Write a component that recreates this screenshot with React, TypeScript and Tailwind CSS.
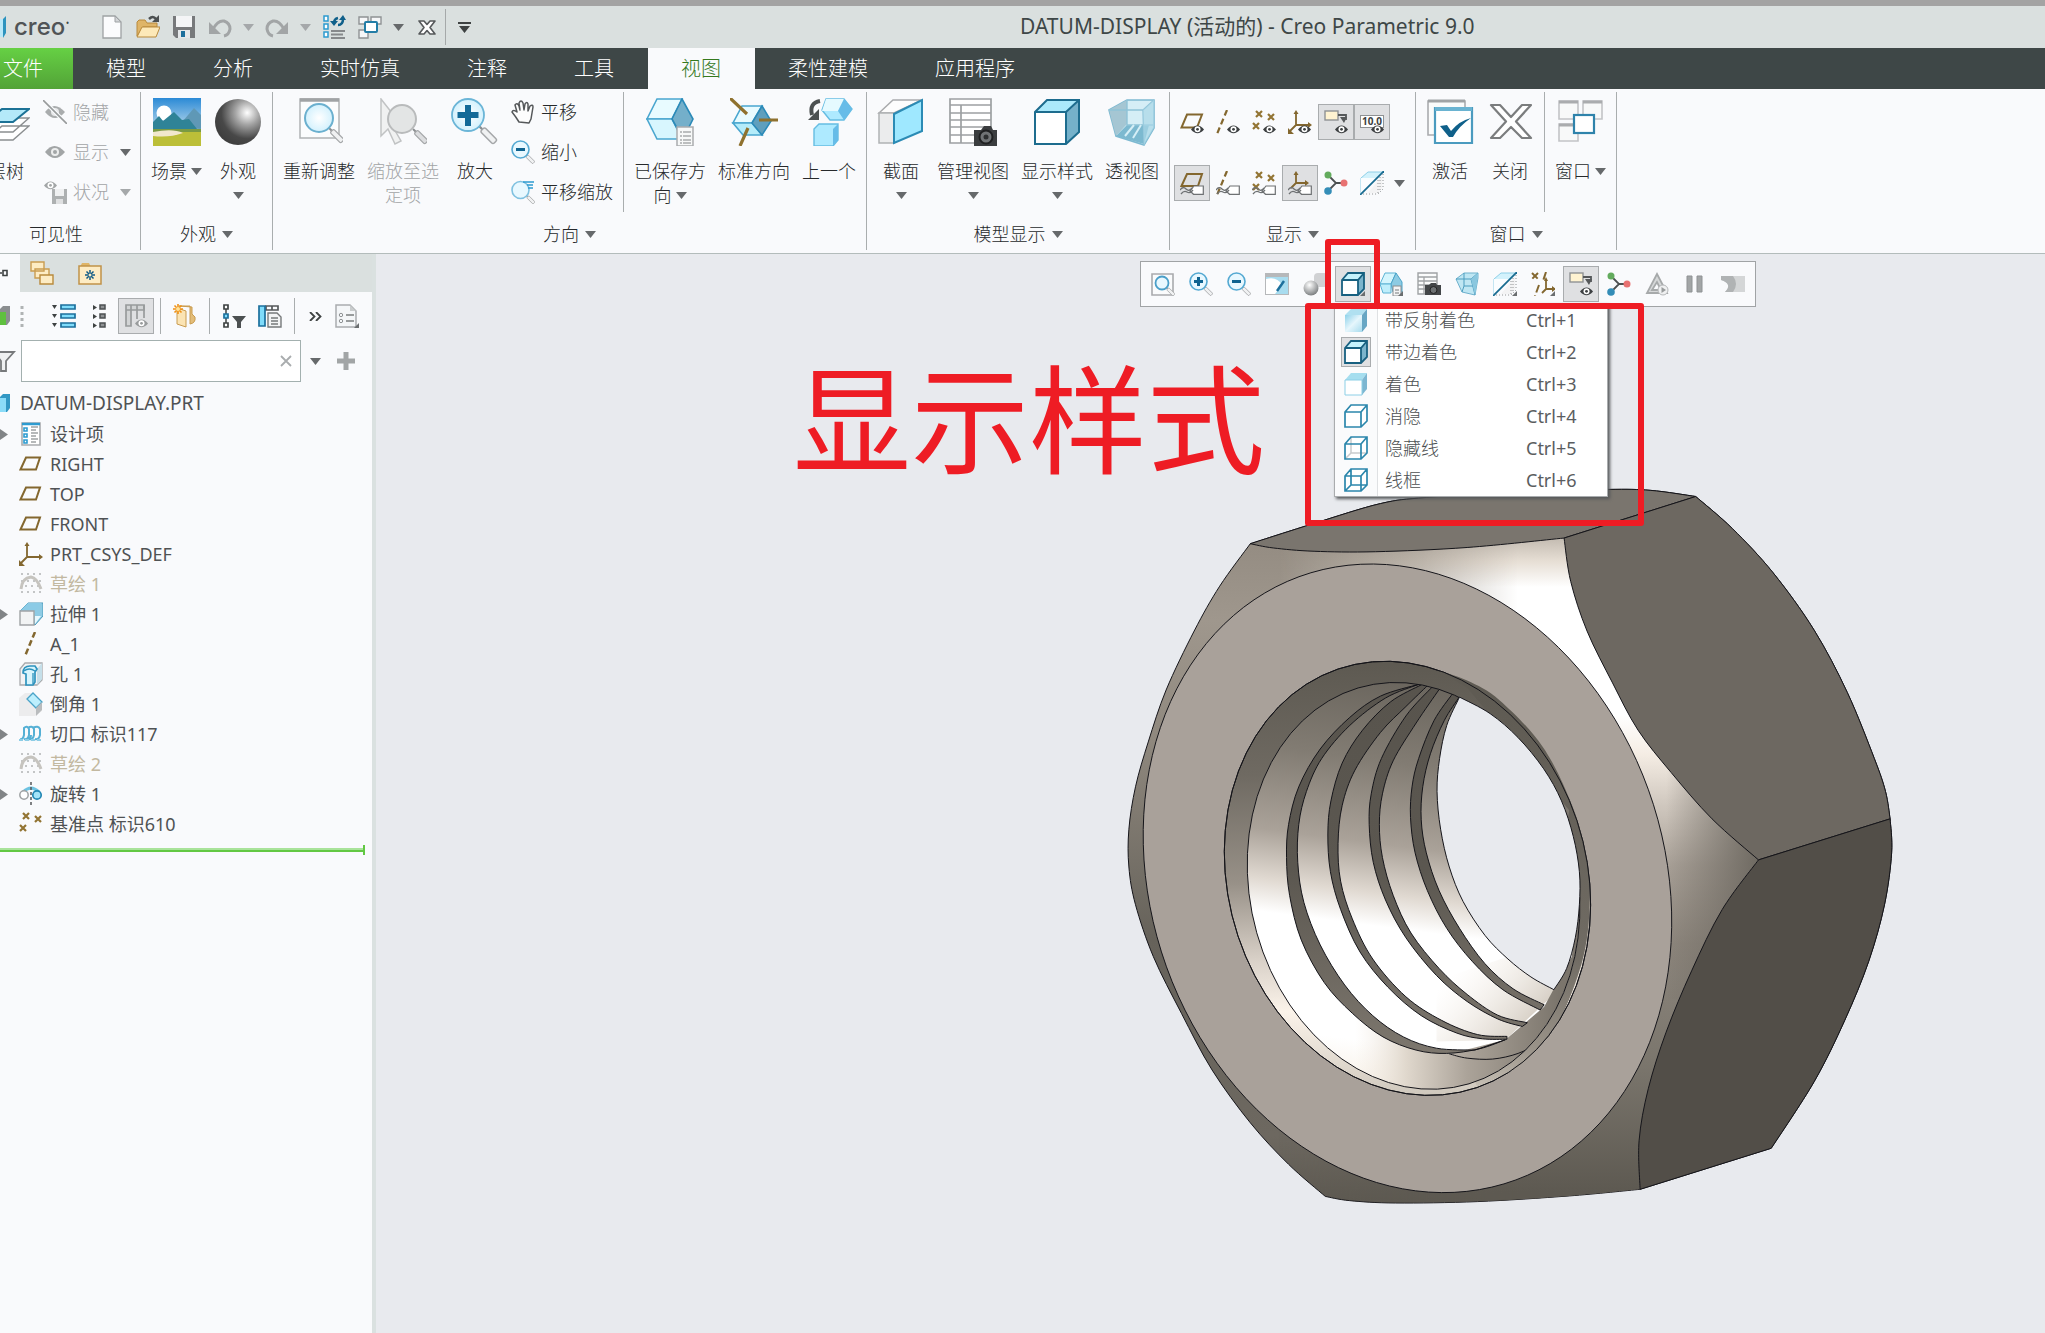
import { useState } from "react";
import type { ReactNode } from "react";

type Point = [number, number];

// Smooth curve through a list of points
function curve(points: Point[], start = "M") {
  let d = `${start}${points[0][0]},${points[0][1]}`;
  for (let i = 0; i < points.length - 1; i++) {
    const a = points[i - 1] ?? points[i];
    const b = points[i];
    const c = points[i + 1];
    const e = points[i + 2] ?? c;
    d += ` C${b[0] + (c[0] - a[0]) / 6},${b[1] + (c[1] - a[1]) / 6}`;
    d += ` ${c[0] - (e[0] - b[0]) / 6},${c[1] - (e[1] - b[1]) / 6} ${c[0]},${c[1]}`;
  }
  return d;
}

function Icon({ box = 24, children }: { box?: number; children: ReactNode }) {
  return (
    <svg
      viewBox={`0 0 ${box} ${box}`}
      className={box === 48 ? "h-12 w-12 shrink-0" : "h-6 w-6 shrink-0"}
      fill="none"
      aria-hidden="true"
    >
      {children}
    </svg>
  );
}

function Caret({ faded = false }: { faded?: boolean }) {
  return (
    <svg viewBox="0 0 11 7" className="h-[7px] w-[11px] shrink-0" aria-hidden="true">
      <path d="M0 0h11L5.5 7z" fill={faded ? "#a5a8aa" : "#66696b"} />
    </svg>
  );
}

/* ---------- shared icon parts ---------- */

function Eye({ x, y, color = "#3c3f41" }: { x: number; y: number; color?: string }) {
  return (
    <g transform={`translate(${x} ${y})`}>
      <path d="M0 4.500Q6.500-3.500 13 4.500Q6.500 12 0 4.500z" fill={color} />
      <circle cx="6.500" cy="4.300" r="3" fill="#fff" />
      <circle cx="6.500" cy="4.300" r="1.400" fill={color} />
    </g>
  );
}

function Tag() {
  return (
    <>
      <path d="M10 20l4-5h9.300v8.300H13.500z" fill="#fff" stroke="#6e7173" strokeWidth="1.200" />
      <path d="M0 19q3-4 6-1t6-1M1 23q3-4 6-2t6-2" stroke="#6e7173" strokeWidth="1.300" />
    </>
  );
}

function Handle({ x, y, scale = 1, faded = false }: { x: number; y: number; scale?: number; faded?: boolean }) {
  return (
    <g transform={`translate(${x} ${y}) rotate(45) scale(${scale})`}>
      <rect x="0" y="-1" width="5" height="2" fill="#8b8e90" />
      <rect x="4" y="-2.500" width="15" height="5" rx="1.500" fill={faded ? "#dcdddf" : "#f0f1f2"} stroke="#a5a7a9" strokeWidth="1.300" />
    </g>
  );
}

function Corner() {
  return <path d="M24 19v5h-5z" fill="#6b6e70" />;
}

const Plane = () => <path d="M7 4.500h15l-5 13H1.500z" stroke="#83672f" strokeWidth="2" />;
const PlaneSmall = () => <path d="M7 3h15l-4 12H1.500z" stroke="#83672f" strokeWidth="2" />;
const Axis = () => <path d="M11 0L1 24" stroke="#83672f" strokeWidth="2.200" strokeDasharray="6 3.500" />;
const Cross = ({ x, y }: { x: number; y: number }) => (
  <path d={`M${x} ${y}l6 6m0-6l-6 6`} stroke="#927433" strokeWidth="2.200" />
);
const Points = () => (
  <>
    <Cross x={4} y={1} />
    <Cross x={16} y={4} />
    <Cross x={1} y={13} />
  </>
);
const Csys = () => (
  <>
    <path d="M8 2v13h14M8 15l-6 6" stroke="#83672f" strokeWidth="1.800" />
    <path d="M5.500 4L8 0l2.500 4zM20 12l4 3-4 3zM0 24v-6l6 6z" fill="#83672f" />
  </>
);

/* ---------- small icons ---------- */

const icons = {
  page: (
    <>
      <path d="M3 1h12l6 6v16H3z" fill="#fbfcfd" stroke="#9ea2a4" strokeWidth="1.300" />
      <path d="M15 1v6h6z" fill="#d2d5d7" stroke="#9ea2a4" />
    </>
  ),
  open: (
    <>
      <path d="M1 21V7l2-2h6l2 3h10v4H7z" fill="#dfb568" stroke="#b98a3c" />
      <path d="M1 22l5-10h18l-4 10z" fill="#fde9b8" stroke="#b98a3c" />
      <path d="M13 4q4-4 7 0" stroke="#4c5051" strokeWidth="2.500" />
      <path d="M23 0v7h-7z" fill="#4c5051" />
    </>
  ),
  save: (
    <>
      <path d="M1 1h22v22H4l-3-3z" fill="#77797b" />
      <rect x="4" y="1" width="16" height="11" fill="#f4f5f6" />
      <rect x="6" y="15" width="12" height="8" fill="#e5e8ea" />
      <rect x="9" y="16" width="4" height="6" fill="#1c6f9c" />
    </>
  ),
  undo: (
    <>
      <path d="M5 14Q10 5 16 6q6 2 6 8-1 6-6 7" stroke="#a2a5a6" strokeWidth="3" />
      <path d="M1 7v12h12z" fill="#a2a5a6" />
    </>
  ),
  redo: (
    <>
      <path d="M19 14Q14 5 8 6q-6 2-6 8 1 6 6 7" stroke="#a2a5a6" strokeWidth="3" />
      <path d="M23 7v12H11z" fill="#a2a5a6" />
    </>
  ),
  regen: (
    <>
      <path d="M2 1h4v5H2zM2 9h4v5H2zM2 17h4v5H2z" fill="#fff" stroke="#2d9bd0" strokeWidth="1.500" />
      <path d="M9 16h14M9 19.500h12M9 23h14" stroke="#86898b" strokeWidth="2" />
      <path d="M12 8q0-4 4-5M21 4q0 6-5 6" stroke="#10608a" strokeWidth="2.500" />
      <path d="M8 6h8l-4 5zM17 5l4-5 3 5z" fill="#10608a" />
    </>
  ),
  windows: (
    <>
      <path d="M1 2h9v7H1zM13 2h10v7H13zM1 15h9v8H1z" fill="#f6f7f8" stroke="#8f9294" strokeWidth="1.400" />
      <rect x="7" y="7" width="12" height="10" rx="1" fill="#fff" stroke="#237da6" strokeWidth="2" />
    </>
  ),
  close: (
    <path
      d="M4 6h5l3 3.500L15 6h5l-5 6.500 5 6.500h-5l-3-3.500L9 19H4l5-6.500z"
      fill="#fff"
      stroke="#55585a"
      strokeWidth="1.600"
      strokeLinejoin="round"
    />
  ),
  hide: (
    <>
      <path d="M2 12q9-12 20 0-10 12-20 0z" fill="#a9acad" />
      <circle cx="12" cy="12" r="4" fill="#e7e8ea" />
      <path d="M0 0l24 24" stroke="#f9fafc" strokeWidth="4" />
      <path d="M0 0l24 24" stroke="#989b9c" strokeWidth="1.600" />
    </>
  ),
  show: (
    <>
      <path d="M2 12q9-12 20 0-10 12-20 0z" fill="#a2a5a6" />
      <circle cx="12" cy="12" r="4" fill="#eceded" />
      <circle cx="12" cy="12" r="2" fill="#a2a5a6" />
    </>
  ),
  status: (
    <>
      <Eye x={1} y={1} color="#a2a5a6" />
      <rect x="9" y="9" width="15" height="15" fill="#adb0b1" />
      <rect x="12" y="9" width="9" height="7" fill="#eff0f1" />
      <rect x="13" y="19" width="7" height="5" fill="#dfe0e1" />
    </>
  ),
  pan: (
    <path
      d="M8 22Q5 17 1 12q1-3 5 0L4 5q2-3 4 1l1 4-1-7q2-4 4 0l1 7 1-6q2-3 3 0v7l2-5q3-2 3 1l-2 12-2 4z"
      fill="#fdfdfd"
      stroke="#55585a"
      strokeWidth="1.500"
      strokeLinejoin="round"
    />
  ),
  zoomIn: (
    <>
      <Handle x={14} y={14} scale={0.65} />
      <circle cx="9.500" cy="9.500" r="8.500" fill="#e8f8ff" stroke="#54a9d2" strokeWidth="1.600" />
      <path d="M9.500 5v9M5 9.500h9" stroke="#0f6390" strokeWidth="3" />
    </>
  ),
  zoomOut: (
    <>
      <Handle x={14} y={14} scale={0.65} />
      <circle cx="9.500" cy="9.500" r="8.500" fill="#e8f8ff" stroke="#54a9d2" strokeWidth="1.600" />
      <path d="M5 9.500h9" stroke="#0f6390" strokeWidth="3" />
    </>
  ),
  panZoom: (
    <>
      <Handle x={15} y={15} scale={0.6} />
      <circle cx="9.500" cy="10" r="8.500" fill="#e8f8ff" stroke="#7fc1e0" strokeWidth="1.600" />
      <path d="M12 2h11M16 5h6M17 8h5" stroke="#2d9bd0" strokeWidth="1.600" />
    </>
  ),
  refit: (
    <>
      <path d="M1 2h21v21H1z" fill="#fafbfc" stroke="#a9abad" strokeWidth="1.600" />
      <Handle x={15} y={15} scale={0.6} />
      <circle cx="11" cy="11" r="6.500" fill="#e8f8ff" stroke="#4a9fc9" strokeWidth="1.800" />
    </>
  ),
  repaint: (
    <>
      <rect x="0" y="1" width="24" height="22" fill="#b6b8ba" />
      <rect x="1" y="5" width="22" height="17" fill="#a8dcef" />
      <path d="M1 7q11-3 16 6l-7 9H1z" fill="#fff" />
      <path d="M19 9l-7 10" stroke="#1c6f9c" strokeWidth="2.500" />
    </>
  ),
  render: (
    <>
      <rect x="11" y="1" width="14" height="14" rx="4" fill="#d0d1d3" />
      <circle cx="8" cy="16" r="7.500" fill="url(#ball)" />
    </>
  ),
  shadedEdges: (
    <>
      <path d="M1 8l6-7h16l-6 7z" fill="#c5f2fc" />
      <path d="M17 8l6-7v16l-6 6z" fill="#7bb4cc" />
      <path d="M1 8h16v15H1z" fill="#fff" />
      <path d="M1 8l6-7h16v16l-6 6H1zM1 8h16l6-7M17 8v15" stroke="#176080" strokeWidth="1.800" />
    </>
  ),
  reflections: (
    <>
      <path d="M1 7l6-6h16l-5 6z" fill="#b0e0f0" />
      <path d="M18 7l5-6v17l-5 6z" fill="#67a6c4" />
      <path d="M1 7h17v17H1z" fill="url(#glass)" />
    </>
  ),
  shaded: (
    <>
      <path d="M1 8l6-7h16l-5 7z" fill="#a5deef" />
      <path d="M18 8l5-7v16l-5 6z" fill="#7cb6d1" />
      <path d="M1 8h17v15H1z" fill="#fff" stroke="#8ccfe6" />
    </>
  ),
  noHidden: (
    <>
      <path d="M1 8l6-7h16v16l-6 6H1z" fill="#fff" />
      <path d="M1 8l6-7h16v16l-6 6H1zM1 8h16l6-7M17 8v15" stroke="#2b87ac" strokeWidth="1.700" />
    </>
  ),
  hiddenLine: (
    <>
      <path d="M1 8l6-7h16v16l-6 6H1z" fill="#fff" />
      <path d="M7 1v16h16M7 17l-6 6" stroke="#c9cbcd" strokeWidth="1.500" />
      <path d="M1 8l6-7h16v16l-6 6H1zM1 8h16l6-7M17 8v15" stroke="#2b87ac" strokeWidth="1.700" />
    </>
  ),
  wireframe: (
    <>
      <path d="M1 8l6-7h16v16l-6 6H1z" fill="#fff" />
      <path d="M1 8l6-7h16v16l-6 6H1zM1 8h16l6-7M17 8v15M7 1v16h16M7 17l-6 6" stroke="#2b87ac" strokeWidth="1.700" />
    </>
  ),
  saved: (
    <>
      <path d="M6 1h11l-5 11H1z" fill="#d4f5fd" stroke="#5bb2d4" />
      <path d="M17 1l6 9v10h-9l-2-8z" fill="#8ccbe3" stroke="#4aa3c8" />
      <path d="M1 12h11v9H4z" fill="#bfeefb" stroke="#5bb2d4" />
      <rect x="14" y="14" width="8" height="10" fill="#f3f4f5" stroke="#8b8e90" />
      <path d="M16 18h4M16 21h4" stroke="#77797b" />
    </>
  ),
  viewManager: (
    <>
      <path d="M1 1h19v21H1z" fill="#fbfcfc" stroke="#a0a3a5" strokeWidth="1.400" />
      <path d="M1 5h19M1 9h19M1 13h19M1 17h19M7 5v17" stroke="#a0a3a5" strokeWidth="1.300" />
      <path d="M8 13h4l2-2h5l1 2h4v10H8z" fill="#434648" />
      <circle cx="16.500" cy="18" r="3.500" fill="#6d7173" stroke="#222" />
    </>
  ),
  perspective: (
    <>
      <path d="M1 7l8-6h14v5l-3 17-13-3z" fill="#bfe6f3" stroke="#6eb1cd" />
      <path d="M9 1v13h9M9 14l-2 6M1 7h15l7-6M16 7l4 16" stroke="#4d9dbf" />
      <path d="M16 7l7-6-2 17-1 5z" fill="#8ac7df" />
    </>
  ),
  section: (
    <>
      <path d="M1 7l7-6h15l-6 6-16 16z" fill="#d3f2fc" stroke="#8fd0e8" />
      <path d="M1 7h16L1 23z" fill="#fafdff" />
      <path d="M8 22h10l4-5V5z" fill="#f3f3f4" />
      <path d="M23 3v15l-5 5H3M20 6v14M18 9v13" stroke="#8f9294" strokeDasharray="1 2" />
      <path d="M24 0L0 24" stroke="#176a90" strokeWidth="1.800" />
    </>
  ),
  datumFilters: (
    <>
      <path d="M1 1l6 6m0-6l-6 6M15 0l-3 9M8 13L4 24" stroke="#83672f" strokeWidth="2" strokeDasharray="8 3" />
      <path d="M15 8v9h9M15 17l-4 4" stroke="#83672f" strokeWidth="1.800" />
      <path d="M13 9l2-4 2 4zM21 14l4 3-4 3z" fill="#83672f" />
    </>
  ),
  annotation: (
    <>
      <rect x="1" y="1" width="13" height="9" fill="#fff3d1" stroke="#8f9294" strokeWidth="1.400" />
      <path d="M14 5h8v5" stroke="#55585a" strokeWidth="1.800" />
      <path d="M16 7h7l-3 6z" fill="#55585a" />
      <Eye x={11} y={15} />
    </>
  ),
  spin: (
    <>
      <path d="M4 4l8 8L4 20M12 12h8" stroke="#4c5051" strokeWidth="1.800" />
      <circle cx="4" cy="4" r="3.500" fill="#63ab5d" />
      <circle cx="20" cy="12" r="3.500" fill="#e87272" />
      <circle cx="4" cy="20" r="3.800" fill="#348db7" />
    </>
  ),
  simulate: (
    <>
      <path d="M12 2l10 19H2zM12 10l-5 8h9z" fill="#d6d8d9" stroke="#a6a9aa" strokeWidth="1.800" fillRule="evenodd" />
      <circle cx="18" cy="18" r="5" fill="#eff0f1" stroke="#b5b7b9" />
      <path d="M16.500 15v6l4.500-3z" fill="#989b9c" />
    </>
  ),
  pause: <path d="M4 4h5v16H4zM14 4h5v16h-5z" fill="#a2a5a6" stroke="#8f9294" />,
  stop: (
    <>
      <path d="M0 4h24v16H4q8-8-4-12z" fill="#d4d6d7" />
      <path d="M0 4h12q6 8 0 16H4q8-8-4-12z" fill="#b0b3b4" />
    </>
  ),
  planeShow: (
    <>
      <Plane />
      <Eye x={11} y={15} />
    </>
  ),
  axisShow: (
    <>
      <Axis />
      <Eye x={11} y={15} />
    </>
  ),
  pointShow: (
    <>
      <Points />
      <Eye x={11} y={15} />
    </>
  ),
  csysShow: (
    <>
      <Csys />
      <Eye x={10} y={15} />
    </>
  ),
  planeTag: (
    <>
      <PlaneSmall />
      <Tag />
    </>
  ),
  axisTag: (
    <>
      <Axis />
      <Tag />
    </>
  ),
  pointTag: (
    <>
      <Points />
      <Tag />
    </>
  ),
  csysTag: (
    <>
      <path d="M8 2v10h11M8 12l-5 5" stroke="#83672f" strokeWidth="1.800" />
      <path d="M5.500 4L8 0l2.500 4zM17 9l4 3-4 3z" fill="#83672f" />
      <Tag />
    </>
  ),
  folders: (
    <>
      <path d="M1 1h13v9H1zM5 8h14v9H5z" fill="#fdecc4" stroke="#c99c50" strokeWidth="1.400" />
      <path d="M10 14h13v9H10z" fill="#fdecc4" stroke="#b98a3c" strokeWidth="1.400" />
    </>
  ),
  favorites: (
    <>
      <path d="M2 6l2-4h7l2 4" fill="#dfb568" />
      <rect x="1" y="5" width="22" height="18" fill="#fdecc4" stroke="#c0924a" strokeWidth="1.500" />
      <path d="M12 9v10M7 14h10M8.500 10.500l7 7M15.500 10.500l-7 7" stroke="#0f5a85" strokeWidth="1.500" />
      <circle cx="12" cy="14" r="1.500" fill="#fdecc4" />
    </>
  ),
  expand: (
    <>
      <path d="M0 1h5L2.500 5zM0 10h5l-2.500 4zM0 19h5l-2.500 4z" fill="#3e4242" />
      <path d="M9 1h14v4H9zM9 10h14v4H9zM9 19h14v4H9z" fill="#7fdcfb" stroke="#1c6f9c" strokeWidth="1.700" />
    </>
  ),
  collapse: (
    <>
      <path d="M5 1v5l4-2.500zM5 10v5l4-2.500zM5 19v5l4-2.500z" fill="#3e4242" />
      <path d="M12 1h5v4h-5zM12 10h5v4h-5zM12 19h5v4h-5z" fill="#8f9294" stroke="#4c5051" strokeWidth="1.500" />
    </>
  ),
  columns: (
    <>
      <path d="M2 1h18v5H2zM2 6h5v16H2z" stroke="#989b9c" strokeWidth="1.700" fill="#d2d4d5" />
      <path d="M13 1v14M20 1v13M7 1v5" stroke="#989b9c" strokeWidth="1.700" />
      <Eye x={11} y={15} color="#989b9c" />
    </>
  ),
  newGroup: (
    <>
      <path d="M6 2h11v18q6-1 5-7l-3-3V3z" fill="#e3bd79" stroke="#c99c50" />
      <path d="M4 4l9 3v16l-9-3z" fill="#fbe4b4" stroke="#c99c50" />
      <path d="M5 0v10M0 5h10M1.500 1.500l7 7M8.500 1.500l-7 7" stroke="#f09114" strokeWidth="1.600" />
      <circle cx="5" cy="5" r="2" fill="#ffe39a" />
    </>
  ),
  treeFilter: (
    <>
      <path d="M4 5v14" stroke="#3e4242" strokeWidth="1.500" />
      <path d="M2 1h4v4H2zM2 19h4v4H2z" fill="#fff" stroke="#3e4242" strokeWidth="1.700" />
      <path d="M2 10h4v4H2z" fill="#7fdcfb" stroke="#1c6f9c" strokeWidth="1.700" />
      <path d="M10 12h14l-5 6v6h-4v-6z" fill="#4c5051" />
    </>
  ),
  treeColumns: (
    <>
      <path d="M8 2h12v4H8zM14 2v4" stroke="#55585a" strokeWidth="1.700" />
      <path d="M1 2h6v20H1z" fill="#7fdcfb" stroke="#1c6f9c" strokeWidth="1.700" />
      <path d="M10 9h9l4 4v10H10z" fill="#f3f4f5" stroke="#77797b" strokeWidth="1.400" />
      <path d="M13 14h7M13 17h7M13 20h7" stroke="#77797b" strokeWidth="1.300" />
    </>
  ),
  settings: (
    <>
      <path d="M1 1h14l6 6v16H1z" fill="#f4f6f8" stroke="#a9acae" strokeWidth="1.500" />
      <path d="M15 1v6h6z" fill="#c9cccd" />
      <path d="M11 11h8M11 17h8" stroke="#989b9c" strokeWidth="2" />
      <circle cx="6" cy="11" r="1.700" stroke="#8f9294" />
      <circle cx="6" cy="17" r="1.700" stroke="#8f9294" />
    </>
  ),
  designItems: (
    <>
      <path d="M3 1h18v22H3z" fill="#fff" stroke="#a9acae" strokeWidth="1.600" />
      <path d="M3 2h18" stroke="#2d9bd0" strokeWidth="2.500" />
      <path d="M5 6h3v3H5zM5 12h3v3H5zM5 18h3v3H5z" stroke="#2d9bd0" strokeWidth="1.600" />
      <path d="M12 5h7M12 8h5M12 11h7M12 14h5M12 17h7M12 20h5" stroke="#9fa2a4" strokeWidth="1.300" />
    </>
  ),
  plane: <path d="M7 5.500h14l-4 12H1.500z" stroke="#83672f" strokeWidth="2" />,
  csys: <Csys />,
  sketch: (
    <>
      <path d="M2 2h20M2 9h20M2 20h20M6 14h14" stroke="#c3c5c6" strokeWidth="2" strokeDasharray="2 4" />
      <path d="M2 17Q3 6 12 5q6 1 10 12" stroke="#c6c4bf" strokeWidth="3" />
    </>
  ),
  extrude: (
    <>
      <path d="M1 9L9 1h15v13l-8 9z" fill="#8ecbe4" stroke="#4c9abb" />
      <path d="M9 1h14l-7 8H1z" fill="#8ccbe6" />
      <path d="M1 9h14v14H1z" fill="#f2f3f4" stroke="#a0a3a5" strokeWidth="1.400" />
      <path d="M16 14h6l-6 8z" fill="#e8f9fe" />
    </>
  ),
  axis: <path d="M16 0L6 24" stroke="#83672f" strokeWidth="2.500" strokeDasharray="6 3" />,
  hole: (
    <>
      <path d="M1 7l5-6h17v17l-5 5H1z" fill="#f2f3f4" stroke="#a9abad" strokeWidth="1.300" />
      <path d="M18 7l5-6v16l-5 6z" fill="#c5dfe9" />
      <path d="M7 23V12l-3-1q0-7 7-7h5l2 3-2 3v10l-2 3z" fill="#d8f5fd" stroke="#2d93be" strokeWidth="1.700" />
      <path d="M5 9q5-4 11 0M14 11v11" stroke="#2d93be" strokeWidth="1.300" />
    </>
  ),
  chamfer: (
    <>
      <path d="M0 6l6-5h7l10 11v7l-7 5H0z" fill="#ececed" />
      <path d="M8 7l6-6 9 9-6 6z" fill="#bdeffd" stroke="#4aa3c8" strokeWidth="1.300" />
      <path d="M17 16l6-6v8l-6 6z" fill="#b9bcbe" />
    </>
  ),
  helix: (
    <>
      <path d="M1 17q3 1 4-4V6q3-3 5 1v6q-1 5-5 4M8 17q4 0 4-4M9 6q4-3 6 1v6q-1 5-5 4M14 6q5-3 7 1v6q-1 5-5 4" stroke="#55b0d5" strokeWidth="2" />
      <path d="M0 18h23" stroke="#8ccde6" strokeWidth="2" strokeDasharray="4 2" />
    </>
  ),
  revolve: (
    <>
      <path d="M4 10q8-8 16 0" stroke="#6ec3e2" strokeWidth="3" />
      <path d="M12 0v24" stroke="#55585a" strokeWidth="1.500" strokeDasharray="3 2" />
      <circle cx="5" cy="13" r="4.200" fill="#fff" stroke="#9fa2a4" strokeWidth="1.500" />
      <circle cx="18" cy="13" r="4.200" fill="#a4e4f9" stroke="#2287b4" strokeWidth="1.700" />
    </>
  ),
  datumPoint: <Points />,
};

type IconName = keyof typeof icons;

/* ---------- large ribbon icons ---------- */

const bigIcons = {
  layers: (
    <>
      <path d="M4 42h27l16-14H20zM4 34h27l16-14H20z" fill="#fff" stroke="#8b8e90" strokeWidth="1.500" />
      <path d="M4 24h27l16-13H20z" fill="#b4e9f9" stroke="#1c7296" strokeWidth="2" />
    </>
  ),
  scene: (
    <>
      <rect width="48" height="48" fill="#bcbf38" />
      <rect width="48" height="32" fill="url(#sky)" />
      <circle cx="11" cy="15" r="7.500" fill="#fff" />
      <path d="M24 30L41 10l7 7v14z" fill="#5f98b6" />
      <path d="M0 24l6-6 4 5L21 14l8 8 7-1 8 10H0z" fill="#2f8397" />
      <path d="M0 31h48v3H0z" fill="#7a9a43" />
      <path d="M0 34q20-4 30 1-14 5-30 3z" fill="#f1e8cc" />
    </>
  ),
  appearance: <circle cx="24" cy="24" r="23" fill="url(#sphere)" />,
  refit: (
    <>
      <path d="M5 1h39v39H5z" fill="#fbfcfd" stroke="#b0b2b4" strokeWidth="1.500" />
      <path d="M5 2h39" stroke="#a0a3a5" strokeWidth="3.500" />
      <Handle x={34} y={30} />
      <circle cx="24" cy="20" r="14" fill="url(#lens)" stroke="#6bb0cf" strokeWidth="2" />
    </>
  ),
  zoomSelected: (
    <>
      <path d="M2 1v37l7-7 7 15 6-3-8-14h10z" fill="#f0f1f1" stroke="#c1c3c4" strokeWidth="1.500" />
      <Handle x={34} y={31} faded />
      <circle cx="23" cy="21" r="14" fill="#e3e5e5" stroke="#b9bbbc" strokeWidth="2" />
    </>
  ),
  zoomIn: (
    <>
      <Handle x={28} y={28} scale={1.200} />
      <circle cx="17" cy="17" r="16" fill="url(#lens)" stroke="#6bb5d7" strokeWidth="1.800" />
      <path d="M17 7v21M6.500 17h21" stroke="#136a98" strokeWidth="6" />
    </>
  ),
  savedViews: (
    <>
      <path d="M11 1h25L26 21H1z" fill="#e8fbff" stroke="#4aa6cf" strokeWidth="1.600" />
      <path d="M1 21h25l10 20H11z" fill="#d8f6fe" stroke="#4aa6cf" strokeWidth="1.600" />
      <path d="M36 1l11 20-10 20-11-20z" fill="#74afca" stroke="#2b8ab8" strokeWidth="1.600" />
      <rect x="31" y="29" width="16" height="19" fill="#f7f8f8" stroke="#aaacae" strokeWidth="1.500" />
      <path d="M34 34h11M34 38h11M34 42h11M34 45h11" stroke="#818486" strokeDasharray="2 1 8 0" />
    </>
  ),
  standard: (
    <>
      <path d="M12 8h20L22 25H3z" fill="#e8fbff" stroke="#4aa6cf" strokeWidth="1.600" />
      <path d="M3 25h19l10 12H13z" fill="#b4ecfa" stroke="#4aa6cf" strokeWidth="1.600" />
      <path d="M32 8l9 15-9 14-10-12z" fill="#5f9fbd" stroke="#2b8ab8" strokeWidth="1.600" />
      <path d="M0 0l17 16M29 22h19M18 30L10 48" stroke="#8f712e" strokeWidth="3.200" />
    </>
  ),
  previous: (
    <>
      <path d="M21 1h18l8 10-8 11H25l-8-10z" fill="#aeeaff" stroke="#66bde2" strokeWidth="1.400" />
      <path d="M21 1h18l-6 12H17z" fill="#e5faff" />
      <path d="M39 1l8 10-8 11-6-9z" fill="#66bce8" />
      <path d="M9 31l5-5h19v16l-5 6H9z" fill="#aeeaff" stroke="#66bde2" strokeWidth="1.400" />
      <path d="M28 31l5-5v16l-5 6z" fill="#66bce8" />
      <path d="M15 3Q4 5 7 17" stroke="#4c5051" strokeWidth="4" />
      <path d="M3 22h11V11z" fill="#4c5051" />
    </>
  ),
  sectionView: (
    <>
      <path d="M2 15L16 2h29L17 15z" fill="#fdfdfd" stroke="#a9abad" strokeWidth="1.500" />
      <path d="M2 15h15v30H2z" fill="#ebeced" stroke="#b0b2b4" strokeWidth="1.500" />
      <path d="M17 16L45 2v31L17 45z" fill="#9fe8ff" stroke="#2b8bb5" strokeWidth="2" />
    </>
  ),
  manager: (
    <>
      <path d="M1 1h41v44H1z" fill="#fff" stroke="#9da0a2" strokeWidth="1.700" />
      <path d="M1 7h41M1 15h41M1 22h41M1 29h41M1 37h41M12 7v38" stroke="#9da0a2" strokeWidth="1.700" />
      <path d="M25 32h7l3-4h7l2 4h4v16H25z" fill="#3b3d3f" />
      <circle cx="37" cy="39" r="6.500" fill="#707375" stroke="#1f2021" strokeWidth="2" />
      <circle cx="37" cy="39" r="2.500" fill="#2d2f30" />
    </>
  ),
  displayStyle: (
    <>
      <path d="M2 14L14 2h32L33 14z" fill="#abe9fb" />
      <path d="M33 14L46 2v32L33 46z" fill="#75b1ca" />
      <path d="M2 14h31v32H2z" fill="#fff" />
      <path d="M2 14L14 2h32v32L33 46H2zM2 14h31L46 2M33 14v32" stroke="#1d6c8e" strokeWidth="2" />
    </>
  ),
  perspective: (
    <>
      <path d="M1 12L19 2h27v28L36 47 8 38z" fill="#d5eef6" stroke="#7db9d1" strokeWidth="1.600" />
      <path d="M1 12L19 2v24L8 38z" fill="#a5c6d3" />
      <path d="M19 27h22l-5 19L8 38z" fill="#7cb9d0" />
      <path d="M19 2v25h26M1 12h34L46 2M35 12l1 35" stroke="#8fc3d8" strokeWidth="1.400" />
      <path d="M17 38l9-11M25 40l8-13" stroke="#d5eef6" strokeWidth="2" />
      <path d="M35 12L46 2v28L36 47z" fill="#a9d7e7" opacity="0.7" />
    </>
  ),
  activate: (
    <>
      <path d="M2 3h37v34H2z" fill="#fafbfb" stroke="#aaacae" strokeWidth="1.600" />
      <path d="M2 3h37" stroke="#a0a3a5" strokeWidth="3" />
      <path d="M9 10h37v35H9z" fill="#fff" stroke="#4b9bbf" strokeWidth="2.200" />
      <path d="M9 11h37" stroke="#6ab3d1" strokeWidth="4" />
      <path d="M14 28l7-1 4 6q8-10 20-13-12 8-18 19h-4z" fill="#0f608a" />
    </>
  ),
  closeWindow: (
    <path
      d="M5 7h9l11 12L36 7h9L30 23.500 45 40h-9L25 29 14 40H5l15-16.500z"
      fill="#fff"
      stroke="#7b7d7e"
      strokeWidth="2.200"
      strokeLinejoin="round"
    />
  ),
  windows: (
    <>
      <path d="M2 3h19v18H2zM26 3h19v18H26zM2 26h19v17H2z" fill="#f8f9f9" stroke="#c2c4c6" strokeWidth="1.600" />
      <path d="M2 4h19M26 4h19M2 27h19" stroke="#aaacae" strokeWidth="3" />
      <rect x="17" y="17" width="20" height="18" fill="#fff" stroke="#2f83ab" strokeWidth="2.200" />
    </>
  ),
};

function GradientDefs() {
  return (
    <svg className="absolute h-0 w-0" aria-hidden="true">
      <defs>
        <radialGradient id="sphere" cx="0.7" cy="0.3" r="0.75">
          <stop offset="0" stopColor="#fff" />
          <stop offset="0.35" stopColor="#a3a3a3" />
          <stop offset="0.75" stopColor="#484848" />
          <stop offset="1" stopColor="#3f3f3f" />
        </radialGradient>
        <radialGradient id="ball" cx="0.4" cy="0.3" r="0.7">
          <stop offset="0" stopColor="#fff" />
          <stop offset="1" stopColor="#7d8082" />
        </radialGradient>
        <radialGradient id="lens">
          <stop offset="0" stopColor="#fff" />
          <stop offset="1" stopColor="#d3f1fd" />
        </radialGradient>
        <linearGradient id="sky" x1="0" y1="0" x2="0" y2="1">
          <stop offset="0" stopColor="#2b8ad6" />
          <stop offset="1" stopColor="#bfdcec" />
        </linearGradient>
        <linearGradient id="glass" x1="0" y1="0" x2="1" y2="1">
          <stop offset="0" stopColor="#8fd2ea" />
          <stop offset="0.5" stopColor="#e6f6fc" />
          <stop offset="1" stopColor="#a8dcee" />
        </linearGradient>
      </defs>
    </svg>
  );
}

/* ---------- ribbon ---------- */

function BigButton({
  icon,
  lines,
  arrow,
  disabled = false,
}: {
  icon: keyof typeof bigIcons;
  lines: string[];
  arrow?: "inline" | "below";
  disabled?: boolean;
}) {
  return (
    <button
      disabled={disabled}
      className={`flex min-w-[60px] flex-col items-center px-[6px] pt-[6px] text-lg leading-6 whitespace-nowrap ${
        disabled ? "text-[#a2a4a6]" : "text-[#26292b]"
      }`}
    >
      <Icon box={48}>{bigIcons[icon]}</Icon>
      <span className="mt-[13px] flex flex-col items-center">
        {lines.map((line, index) => (
          <span key={line} className="flex items-center gap-1">
            {line}
            {arrow === "inline" && index === lines.length - 1 && <Caret />}
          </span>
        ))}
        {arrow === "below" && (
          <span className="flex h-6 items-center">
            <Caret />
          </span>
        )}
      </span>
    </button>
  );
}

function SmallButton({ icon, label, disabled = false, arrow }: { icon: IconName; label: string; disabled?: boolean; arrow?: "dark" | "faded" }) {
  return (
    <button
      disabled={disabled}
      className={`flex h-10 items-center gap-[6px] text-lg whitespace-nowrap ${
        disabled ? "text-[#a2a4a6]" : "text-[#26292b]"
      }`}
    >
      <Icon>{icons[icon]}</Icon>
      {label}
      {arrow && (
        <span className="ml-[5px]">
          <Caret faded={arrow === "faded"} />
        </span>
      )}
    </button>
  );
}

function Group({ label, arrow = true, children }: { label: string; arrow?: boolean; children: ReactNode }) {
  return (
    <section className="my-[3px] flex shrink-0 flex-col border-r border-[#a9adae] px-1">
      <div className="flex h-[120px]">{children}</div>
      <button className="mx-auto mt-[10px] mb-1 flex h-6 items-center gap-[6px] text-lg leading-6 text-[#26292b]">
        {label}
        {arrow && <Caret />}
      </button>
    </section>
  );
}

function Toggle({ icon, label, on = false, corner = false }: { icon: IconName; label: string; on?: boolean; corner?: boolean }) {
  const [pressed, setPressed] = useState(on);
  return (
    <button
      aria-label={label}
      aria-pressed={pressed}
      onClick={() => setPressed(!pressed)}
      className={`flex h-9 w-9 shrink-0 items-center justify-center border ${
        pressed ? "border-[#a9acae] bg-[#dfe0e2]" : "border-transparent"
      }`}
    >
      <Icon>
        {icons[icon]}
        {corner && <Corner />}
      </Icon>
    </button>
  );
}

function Ribbon() {
  return (
    <div className="flex overflow-hidden border-b border-[#b3bcbb] bg-[#f9fafc]">
      <div className="-ml-7 flex">
        <Group label="可见性" arrow={false}>
          <BigButton icon="layers" lines={["层树"]} />
          <div className="ml-[7px] pr-[5px]">
            <SmallButton icon="hide" label="隐藏" disabled />
            <SmallButton icon="show" label="显示" disabled arrow="dark" />
            <SmallButton icon="status" label="状况" disabled arrow="faded" />
          </div>
        </Group>
      </div>
      <Group label="外观">
        <BigButton icon="scene" lines={["场景"]} arrow="inline" />
        <BigButton icon="appearance" lines={["外观"]} arrow="below" />
      </Group>
      <Group label="方向">
        <BigButton icon="refit" lines={["重新调整"]} />
        <BigButton icon="zoomSelected" lines={["缩放至选", "定项"]} disabled />
        <BigButton icon="zoomIn" lines={["放大"]} />
        <div className="mr-1 px-[6px]">
          <SmallButton icon="pan" label="平移" />
          <SmallButton icon="zoomOut" label="缩小" />
          <SmallButton icon="panZoom" label="平移缩放" />
        </div>
        <div className="mr-1 border-l border-[#a9adae]" />
        <BigButton icon="savedViews" lines={["已保存方", "向"]} arrow="inline" />
        <BigButton icon="standard" lines={["标准方向"]} />
        <BigButton icon="previous" lines={["上一个"]} />
      </Group>
      <Group label="模型显示">
        <BigButton icon="sectionView" lines={["截面"]} arrow="below" />
        <BigButton icon="manager" lines={["管理视图"]} arrow="below" />
        <BigButton icon="displayStyle" lines={["显示样式"]} arrow="below" />
        <BigButton icon="perspective" lines={["透视图"]} />
      </Group>
      <Group label="显示">
        <div className="flex flex-col gap-[25px] pt-3">
          <div className="flex">
            <Toggle icon="planeShow" label="平面显示" />
            <Toggle icon="axisShow" label="轴显示" />
            <Toggle icon="pointShow" label="点显示" />
            <Toggle icon="csysShow" label="坐标系显示" />
            <Toggle icon="annotation" label="注释显示" on />
            <button aria-label="尺寸显示" className="flex h-9 w-9 items-center justify-center border border-[#a9acae] bg-[#dfe0e2]">
              <Icon>
                <rect x="0.500" y="5.500" width="23" height="12" fill="#fff" stroke="#8f9294" />
                <text x="2" y="15" fontSize="10" fontWeight="700" fill="#3c3f41" fontFamily="Noto Sans">
                  10.0
                </text>
                <Eye x={11} y={15} />
              </Icon>
            </button>
          </div>
          <div className="flex items-center">
            <Toggle icon="planeTag" label="平面标记" on />
            <Toggle icon="axisTag" label="轴标记" />
            <Toggle icon="pointTag" label="点标记" />
            <Toggle icon="csysTag" label="坐标系标记" on />
            <Toggle icon="spin" label="旋转中心" />
            <Toggle icon="section" label="截面显示" />
            <button aria-label="更多显示选项" className="pr-[6px] pl-1">
              <Caret />
            </button>
          </div>
        </div>
      </Group>
      <Group label="窗口">
        <BigButton icon="activate" lines={["激活"]} />
        <BigButton icon="closeWindow" lines={["关闭"]} />
        <div className="mx-1 border-l border-[#a9adae]" />
        <BigButton icon="windows" lines={["窗口"]} arrow="inline" />
      </Group>
    </div>
  );
}

/* ---------- title bar and tabs ---------- */

function QuickButton({ icon, label }: { icon: IconName; label: string }) {
  return (
    <button aria-label={label} className="flex w-9 justify-center">
      <Icon>{icons[icon]}</Icon>
    </button>
  );
}

function QuickArrow({ label, faded = false }: { label: string; faded?: boolean }) {
  return (
    <button aria-label={label} className="flex h-6 w-[21px] items-center justify-center">
      <Caret faded={faded} />
    </button>
  );
}

function TitleBar() {
  return (
    <header className="relative flex h-[48px] items-center border-t-[6px] border-[#a3a3a3] bg-[#dae0df] text-[#3e4747]">
      <div className="flex w-[94px] items-center">
        <svg viewBox="0 0 7 24" className="h-6 w-[7px]" aria-hidden="true">
          <path d="M0 4h3v18H0z" fill="#b9e8f8" />
          <path d="M3 4l3-3v17l-3 5z" fill="#2d93be" />
        </svg>
        <span className="ml-[7px] font-['Inter'] text-2xl leading-6 font-medium text-[#505456]">creo</span>
        <span className="mb-2 text-xs leading-3">•</span>
      </div>
      <QuickButton icon="page" label="新建" />
      <QuickButton icon="open" label="打开" />
      <QuickButton icon="save" label="保存" />
      <QuickButton icon="undo" label="撤消" />
      <QuickArrow label="撤消列表" faded />
      <QuickButton icon="redo" label="重做" />
      <QuickArrow label="重做列表" faded />
      <QuickButton icon="regen" label="重新生成" />
      <QuickButton icon="windows" label="窗口" />
      <QuickArrow label="窗口列表" />
      <QuickButton icon="close" label="关闭" />
      <div className="h-9 border-l border-[#a5a9a9]" />
      <button aria-label="自定义快速访问工具栏" className="flex w-9 justify-center">
        <svg viewBox="0 0 13 11" className="h-[11px] w-[13px]" aria-hidden="true">
          <path d="M0 0h13v2H0zM1 4h11l-5.500 7z" fill="#3e4242" />
        </svg>
      </button>
      <h1 className="ml-auto w-[1025px] text-[21px] font-normal">DATUM-DISPLAY (活动的) - Creo Parametric 9.0</h1>
    </header>
  );
}

const tabs = ["模型", "分析", "实时仿真", "注释", "工具", "视图", "柔性建模", "应用程序"];

function TabBar() {
  const [active, setActive] = useState("视图");
  return (
    <nav className="flex h-[41px] bg-[#3e4747] text-xl">
      <button className="w-[73px] bg-linear-to-b from-[#66d044] to-[#52a337] pl-[3px] text-left text-white">文件</button>
      {tabs.map((tab) => (
        <button
          key={tab}
          onClick={() => setActive(tab)}
          className={`pr-[34px] pl-[33px] ${tab === active ? "bg-[#f9fafc] text-[#35791d]" : "text-white"}`}
        >
          {tab}
        </button>
      ))}
    </nav>
  );
}

/* ---------- model tree ---------- */

const tree: { icon: IconName; label: string; branch?: boolean; faded?: boolean }[] = [
  { icon: "designItems", label: "设计项", branch: true },
  { icon: "plane", label: "RIGHT" },
  { icon: "plane", label: "TOP" },
  { icon: "plane", label: "FRONT" },
  { icon: "csys", label: "PRT_CSYS_DEF" },
  { icon: "sketch", label: "草绘 1", faded: true },
  { icon: "extrude", label: "拉伸 1", branch: true },
  { icon: "axis", label: "A_1" },
  { icon: "hole", label: "孔 1" },
  { icon: "chamfer", label: "倒角 1" },
  { icon: "helix", label: "切口 标识117", branch: true },
  { icon: "sketch", label: "草绘 2", faded: true },
  { icon: "revolve", label: "旋转 1", branch: true },
  { icon: "datumPoint", label: "基准点 标识610" },
];

function PanelSeparator() {
  return <div className="mx-[6px] h-9 w-px bg-[#a9adae]" />;
}

function ModelTree() {
  const [query, setQuery] = useState("");
  return (
    <aside className="w-[376px] shrink-0 border-r-4 border-[#dae1e0] bg-[#f9fafc] text-[#4f5254]">
      <div className="flex h-[38px] items-center bg-[#dae0df]">
        <button aria-label="模型树" className="h-full w-5 bg-[#f9fafc]">
          <svg viewBox="0 0 8 8" className="h-2 w-2" aria-hidden="true">
            <path d="M0 4h2M3 1.500h4v5H3z" fill="none" stroke="#3e4242" strokeWidth="1.600" />
          </svg>
        </button>
        <button aria-label="文件夹浏览器" className="ml-[10px]">
          <Icon>{icons.folders}</Icon>
        </button>
        <button aria-label="收藏夹" className="ml-6">
          <Icon>{icons.favorites}</Icon>
        </button>
      </div>
      <div className="flex h-12 items-center">
        <svg viewBox="0 0 46 24" className="h-6 w-[46px]" aria-hidden="true">
          <path d="M0 5l3-3h7v15l-3 4H0z" fill="#8b8e90" />
          <path d="M0 8h6v13H0z" fill="#5fc03f" />
          <path d="M22 2v22" stroke="#b0b3b4" strokeWidth="3" strokeDasharray="3 3" />
        </svg>
        <Toggle icon="expand" label="全部展开" />
        <Toggle icon="collapse" label="全部折叠" />
        <Toggle icon="columns" label="显示列" on />
        <PanelSeparator />
        <Toggle icon="newGroup" label="新建组" />
        <PanelSeparator />
        <Toggle icon="treeFilter" label="树过滤器" />
        <Toggle icon="treeColumns" label="树列" />
        <PanelSeparator />
        <button aria-label="更多" className="flex w-7 justify-center">
          <svg viewBox="0 0 13 9" className="h-[9px] w-[13px]" aria-hidden="true">
            <path d="M1 0l4.500 4.500L1 9M7 0l4.500 4.500L7 9" fill="none" stroke="#3e4242" strokeWidth="1.800" />
          </svg>
        </button>
        <Toggle icon="settings" label="设置" corner />
      </div>
      <div className="flex items-center">
        <svg viewBox="0 0 21 24" className="h-6 w-[21px]" aria-hidden="true">
          <path d="M-6 3h20L6 12v10H1V12z" fill="#eff0f1" stroke="#77797b" strokeWidth="1.800" />
        </svg>
        <div className="flex h-[42px] w-[280px] items-center border border-[#a3b0af] bg-white">
          <input
            aria-label="搜索模型树"
            value={query}
            onChange={(event) => setQuery(event.target.value)}
            className="min-w-0 flex-1 px-2 text-lg outline-none"
          />
          <button aria-label="清除" onClick={() => setQuery("")} className="mr-2">
            <svg viewBox="0 0 12 12" className="h-3 w-3" aria-hidden="true">
              <path d="M1 1l10 10M11 1L1 11" stroke="#a9acae" strokeWidth="1.800" />
            </svg>
          </button>
        </div>
        <button aria-label="搜索选项" className="px-[9px]">
          <Caret />
        </button>
        <button aria-label="添加" className="ml-[7px]">
          <svg viewBox="0 0 18 18" className="h-[18px] w-[18px]" aria-hidden="true">
            <path d="M9 0v18M0 9h18" stroke="#a2a5a6" strokeWidth="5" />
          </svg>
        </button>
      </div>
      <ul className="mt-[7px] text-lg font-normal">
        <li className="flex h-[30px] items-center text-[19px]">
          <svg viewBox="0 0 20 24" className="h-6 w-5" aria-hidden="true">
            <path d="M0 5l3-3h7v14l-3 4H0z" fill="#3298c4" />
            <path d="M0 6h6v14H0z" fill="#8bdcf8" />
          </svg>
          DATUM-DISPLAY.PRT
        </li>
        {tree.map((item) => (
          <li key={item.label} className={`flex h-[30px] items-center ${item.faded ? "text-[#c2b8a0]" : ""}`}>
            <span className="w-[19px]">
              {item.branch && (
                <svg viewBox="0 0 8 11" className="h-[11px] w-2" aria-hidden="true">
                  <path d="M0 0l8 5.500L0 11z" fill="#818486" />
                </svg>
              )}
            </span>
            <Icon>{icons[item.icon]}</Icon>
            <span className="ml-[7px]">{item.label}</span>
          </li>
        ))}
      </ul>
      <div className="mt-[6px] flex w-[365px] items-center">
        <div className="h-1 flex-1 border-t-2 border-[#a9e39a] bg-[#62c843]" />
        <div className="h-[10px] w-[2px] bg-[#62c843]" />
      </div>
    </aside>
  );
}

/* ---------- graphics area ---------- */

const topEdge: Point[] = [[275, 135], [400, 92], [530, 50], [620, 37], [800, 25], [975, 20], [1060, 22], [1148, 35]];
const rightUpper: Point[] = [[1148, 35], [1220, 103], [1300, 197], [1380, 318], [1445, 450], [1498, 590], [1520, 660], [1529, 718]];
const rightLower: Point[] = [[1529, 718], [1532, 790], [1518, 900], [1487, 1020], [1440, 1145], [1380, 1275], [1296, 1416]];

const silhouette =
  curve(topEdge) +
  curve(rightUpper, "L") +
  curve(rightLower, "L") +
  curve([[1039, 1503], [900, 1517], [720, 1529], [560, 1532], [470, 1527], [422, 1518]], "L") +
  curve([[422, 1518], [350, 1450], [275, 1362], [200, 1250], [140, 1130], [85, 1010], [50, 900], [37, 820], [37, 740], [50, 650], [75, 555], [110, 445], [165, 320], [215, 225], [275, 135]], "L");

const opening =
  curve([[685, 460], [660, 520], [646, 590], [641, 660], [648, 740], [665, 820], [692, 893], [735, 965], [780, 1015], [825, 1053], [870, 1080]]) +
  curve([[870, 1080], [895, 1035], [912, 970], [920, 900], [920, 830], [908, 755], [885, 680], [850, 612], [800, 546], [745, 495], [685, 460]], "L");

const threads: [Point[], Point[]][] = [
  [
    [[605, 433], [530, 458], [470, 503], [412, 570], [370, 650], [350, 730], [346, 800], [352, 880], [375, 975], [420, 1065], [475, 1130], [535, 1180], [600, 1208], [660, 1215], [725, 1205], [775, 1186]],
    [[715, 1208], [640, 1204], [575, 1180], [515, 1135], [460, 1070], [412, 985], [380, 895], [368, 810], [370, 730], [385, 660], [415, 590], [470, 520], [540, 462], [605, 433]],
  ],
  [
    [[610, 434], [550, 470], [495, 530], [455, 600], [433, 680], [427, 750], [432, 830], [452, 910], [490, 1000], [545, 1075], [610, 1135], [680, 1172], [730, 1184], [778, 1185]],
    [[778, 1179], [720, 1175], [650, 1145], [580, 1095], [515, 1015], [475, 930], [452, 850], [447, 770], [455, 690], [480, 615], [530, 535], [580, 480], [622, 436]],
  ],
  [
    [[632, 438], [580, 500], [532, 590], [512, 665], [508, 730], [516, 810], [540, 890], [580, 970], [640, 1050], [700, 1105], [760, 1142], [808, 1158]],
    [[818, 1150], [760, 1134], [700, 1090], [645, 1035], [590, 960], [555, 880], [534, 800], [528, 730], [534, 665], [555, 595], [600, 515], [645, 444]],
  ],
  [
    [[672, 452], [635, 510], [605, 590], [592, 650], [589, 715], [598, 790], [622, 870], [660, 950], [710, 1020], [770, 1080], [843, 1123]],
    [[851, 1112], [790, 1078], [735, 1025], [685, 950], [645, 870], [620, 790], [610, 720], [613, 650], [628, 580], [655, 510], [685, 459]],
  ],
];

function Nut() {
  return (
    <svg
      viewBox="0 0 1568 1568"
      preserveAspectRatio="none"
      className="absolute top-[226px] left-[734px] h-[740px] w-[800px]"
      role="img"
      aria-label="DATUM-DISPLAY"
    >
      <defs>
        <linearGradient id="body" gradientUnits="userSpaceOnUse" x1="0" y1="130" x2="0" y2="1530">
          <stop offset="0" stopColor="#948c82" />
          <stop offset="0.12" stopColor="#9f978d" />
          <stop offset="0.3" stopColor="#8f887e" />
          <stop offset="0.6" stopColor="#66625a" />
          <stop offset="0.9" stopColor="#6d6860" />
          <stop offset="1" stopColor="#5d5951" />
        </linearGradient>
        <linearGradient id="cornerShade" gradientUnits="userSpaceOnUse" x1="0" y1="123" x2="0" y2="1510">
          <stop offset="0" stopColor="#c3bbb1" />
          <stop offset="0.035" stopColor="#e6ded4" />
          <stop offset="0.075" stopColor="#fff" />
          <stop offset="0.27" stopColor="#fff" />
          <stop offset="0.33" stopColor="#f5ede4" />
          <stop offset="0.4" stopColor="#d3cbc2" />
          <stop offset="0.5" stopColor="#a8a097" />
          <stop offset="0.62" stopColor="#8c857c" />
          <stop offset="0.8" stopColor="#7b766d" />
          <stop offset="1" stopColor="#5d5951" />
        </linearGradient>
        <linearGradient id="cornerFade" gradientUnits="userSpaceOnUse" x1="330" y1="0" x2="800" y2="0">
          <stop offset="0" stopColor="#000" />
          <stop offset="0.6" stopColor="#777" />
          <stop offset="1" stopColor="#fff" />
        </linearGradient>
        <mask id="cornerMask" maskUnits="userSpaceOnUse" x="0" y="0" width="1568" height="1568">
          <rect width="1568" height="1568" fill="url(#cornerFade)" />
        </mask>
        <linearGradient id="tip" gradientUnits="userSpaceOnUse" x1="1090" y1="0" x2="1271" y2="0">
          <stop offset="0" stopColor="#6f6a62" stopOpacity="0" />
          <stop offset="1" stopColor="#6f6a62" />
        </linearGradient>
        <linearGradient id="chamferRing" gradientUnits="userSpaceOnUse" x1="600" y1="385" x2="420" y2="1280">
          <stop offset="0" stopColor="#5e5a52" />
          <stop offset="0.25" stopColor="#6f6a62" />
          <stop offset="0.5" stopColor="#989188" />
          <stop offset="0.68" stopColor="#d9d1c8" />
          <stop offset="0.8" stopColor="#fbf3ea" />
          <stop offset="1" stopColor="#cfc8bd" />
        </linearGradient>
        <linearGradient id="bore" gradientUnits="userSpaceOnUse" x1="600" y1="430" x2="480" y2="1290">
          <stop offset="0" stopColor="#6b665e" />
          <stop offset="0.2" stopColor="#827c73" />
          <stop offset="0.4" stopColor="#aaa299" />
          <stop offset="0.52" stopColor="#e0d9d1" />
          <stop offset="0.6" stopColor="#fff" />
          <stop offset="0.88" stopColor="#fff" />
          <stop offset="1" stopColor="#f7f0e6" />
        </linearGradient>
        <linearGradient id="boreShade" gradientUnits="userSpaceOnUse" x1="480" y1="0" x2="880" y2="0">
          <stop offset="0" stopColor="#f3ebe1" stopOpacity="0" />
          <stop offset="0.25" stopColor="#e0d8cd" />
          <stop offset="0.55" stopColor="#aba399" />
          <stop offset="1" stopColor="#7b756c" />
        </linearGradient>
        <linearGradient id="threadEnds" gradientUnits="userSpaceOnUse" x1="660" y1="1060" x2="820" y2="1190">
          <stop offset="0" stopColor="#f3ebe1" stopOpacity="0" />
          <stop offset="1" stopColor="#cdc5ba" />
        </linearGradient>
        <linearGradient id="rim" gradientUnits="userSpaceOnUse" x1="900" y1="500" x2="700" y2="1300">
          <stop offset="0" stopColor="#5f5b53" />
          <stop offset="0.6" stopColor="#716c64" />
          <stop offset="0.85" stopColor="#9a9389" />
          <stop offset="1" stopColor="#cfc8bd" />
        </linearGradient>
        <linearGradient id="threadShade" gradientUnits="userSpaceOnUse" x1="0" y1="430" x2="0" y2="1220">
          <stop offset="0" stopColor="#58544d" />
          <stop offset="0.5" stopColor="#5b5750" />
          <stop offset="1" stopColor="#7d776e" />
        </linearGradient>
        <clipPath id="boreClip">
          <ellipse cx="595" cy="860" rx="321.800" ry="434.200" transform="rotate(-10.350 595 860)" />
        </clipPath>
        <clipPath id="chamferClip">
          <path d={silhouette} />
        </clipPath>
      </defs>
      <g stroke="#15151a" strokeWidth="1" strokeLinejoin="round">
        <path d={silhouette} fill="url(#body)" vectorEffect="non-scaling-stroke" />
        <g clipPath="url(#chamferClip)" stroke="none">
          <rect x="300" y="100" width="1000" height="1440" fill="url(#cornerShade)" mask="url(#cornerMask)" />
          <path d="M1090,600H1275V1100H1090z" fill="url(#tip)" />
        </g>
        <path
          d={curve(topEdge) + "L890,123" + curve([[890, 123], [700, 143], [520, 152], [400, 151], [320, 144], [275, 135]], "L")}
          fill="#7a756e"
          vectorEffect="non-scaling-stroke"
        />
        <path
          d={curve([[890, 123], [903, 215], [935, 320], [985, 430], [1035, 530], [1100, 620], [1180, 718], [1271, 805]]) + "L1529,718" + curve([...rightUpper].reverse(), "L") + "z"}
          fill="#6d6861"
          vectorEffect="non-scaling-stroke"
        />
        <path
          d={curve([[1271, 805], [1200, 910], [1140, 1040], [1090, 1170], [1055, 1290], [1037, 1400], [1039, 1503]]) + "L1296,1416" + curve([...rightLower].reverse(), "L") + "z"}
          fill="#524e48"
          vectorEffect="non-scaling-stroke"
        />
        <ellipse cx="583" cy="844" rx="506.300" ry="674.900" transform="rotate(-14.180 583 844)" fill="#a9a19a" vectorEffect="non-scaling-stroke" />
        <ellipse cx="583" cy="844" rx="352.700" ry="464.800" transform="rotate(-12.780 583 844)" fill="url(#chamferRing)" vectorEffect="non-scaling-stroke" />
        <path
          d={curve([[640, 402], [700, 425], [764, 467], [848, 565], [906, 690], [934, 800], [940, 900], [930, 1000], [900, 1100], [865, 1170], [800, 1243], [720, 1286]]) + "L700,1240L860,1000L900,700L700,440z"}
          fill="url(#rim)"
          stroke="none"
        />
        <g clipPath="url(#boreClip)">
          <rect x="240" y="400" width="720" height="920" fill="url(#bore)" stroke="none" />
          <path d="M640,1190L640,1060L780,1010L880,1080L775,1186z" fill="url(#threadEnds)" stroke="none" />
          <path d="M480,1140L600,1208L665,1216L775,1186L851,1116L870,1078L905,1010L922,860L960,860V1300H460z" fill="url(#boreShade)" stroke="none" />
          {threads.map(([outer, inner], index) => (
            <path key={index} d={curve(outer) + curve(inner, "L")} fill="url(#threadShade)" vectorEffect="non-scaling-stroke" />
          ))}
          <path d={curve([[665, 1216], [700, 1225], [750, 1227], [800, 1215], [840, 1192], [870, 1163]])} fill="none" vectorEffect="non-scaling-stroke" />
        </g>
        <ellipse cx="595" cy="860" rx="321.800" ry="434.200" transform="rotate(-10.350 595 860)" fill="none" vectorEffect="non-scaling-stroke" />
        <path d={opening} fill="#e8eaee" vectorEffect="non-scaling-stroke" />
        <ellipse cx="583" cy="844" rx="352.700" ry="464.800" transform="rotate(-12.780 583 844)" fill="none" vectorEffect="non-scaling-stroke" />
      </g>
    </svg>
  );
}

const viewTools: { icon: IconName; label: string; on?: boolean; corner?: boolean }[] = [
  { icon: "refit", label: "重新调整" },
  { icon: "zoomIn", label: "放大" },
  { icon: "zoomOut", label: "缩小" },
  { icon: "repaint", label: "重画" },
  { icon: "render", label: "渲染选项" },
  { icon: "shadedEdges", label: "显示样式", on: true, corner: true },
  { icon: "saved", label: "已保存方向", corner: true },
  { icon: "viewManager", label: "管理视图" },
  { icon: "perspective", label: "透视图" },
  { icon: "section", label: "截面", corner: true },
  { icon: "datumFilters", label: "基准显示过滤器", corner: true },
  { icon: "annotation", label: "注释显示", on: true },
  { icon: "spin", label: "旋转中心" },
  { icon: "simulate", label: "仿真" },
  { icon: "pause", label: "暂停" },
  { icon: "stop", label: "停止" },
];

const styles: { icon: IconName; label: string; keys: string }[] = [
  { icon: "reflections", label: "带反射着色", keys: "Ctrl+1" },
  { icon: "shadedEdges", label: "带边着色", keys: "Ctrl+2" },
  { icon: "shaded", label: "着色", keys: "Ctrl+3" },
  { icon: "noHidden", label: "消隐", keys: "Ctrl+4" },
  { icon: "hiddenLine", label: "隐藏线", keys: "Ctrl+5" },
  { icon: "wireframe", label: "线框", keys: "Ctrl+6" },
];

function StyleMenu() {
  const [current, setCurrent] = useState("带边着色");
  return (
    <div role="menu" className="absolute top-[49px] left-[958px] w-[274px] border border-[#a9acae] bg-white text-lg text-[#4c4f51] shadow-[2px_2px_3px_#55585a]">
      {styles.map((style) => (
        <button
          key={style.label}
          role="menuitemradio"
          aria-checked={style.label === current}
          onClick={() => setCurrent(style.label)}
          className="flex h-8 w-full items-center text-left"
        >
          <span className="flex h-8 w-[43px] items-center justify-center border-r border-[#dfe1e3] bg-[#fafbfc]">
            <span
              className={`flex h-[30px] w-[30px] items-center justify-center border ${
                style.label === current ? "border-[#a9acae] bg-[#dfe0e2]" : "border-transparent"
              }`}
            >
              <Icon>{icons[style.icon]}</Icon>
            </span>
          </span>
          <span className="ml-[7px] w-[141px]">{style.label}</span>
          <span className="font-normal text-[#5a5d5f]">{style.keys}</span>
        </button>
      ))}
    </div>
  );
}

function GraphicsArea() {
  return (
    <main className="relative flex-1 overflow-hidden bg-[#e8eaee]">
      <Nut />
      <p className="absolute top-[94px] left-[417px] text-[118px] leading-[144px] font-normal whitespace-nowrap text-[#ee1c24]">显示样式</p>
      <div className="absolute top-[7px] left-[764px] flex h-[46px] items-center gap-[2px] border border-[#a0a3a5] bg-[#f9fafc] px-1">
        {viewTools.map((tool) => (
          <Toggle key={tool.label} icon={tool.icon} label={tool.label} on={tool.on} corner={tool.corner} />
        ))}
      </div>
      <StyleMenu />
      <div className="pointer-events-none absolute top-[49px] left-[929px] h-[223px] w-[339px] rounded-[3px] border-[6px] border-[#ee1c24]" />
    </main>
  );
}

export default function App() {
  return (
    <div className="relative flex min-h-screen flex-col overflow-hidden font-['Noto_Sans','Noto_Sans_CJK_SC',sans-serif] font-light">
      <GradientDefs />
      <TitleBar />
      <TabBar />
      <Ribbon />
      <div className="flex flex-1">
        <ModelTree />
        <GraphicsArea />
      </div>
      <div className="pointer-events-none absolute top-[239px] left-[1325px] h-[70px] w-[55px] rounded-[3px] border-[6px] border-[#ee1c24]" />
    </div>
  );
}
